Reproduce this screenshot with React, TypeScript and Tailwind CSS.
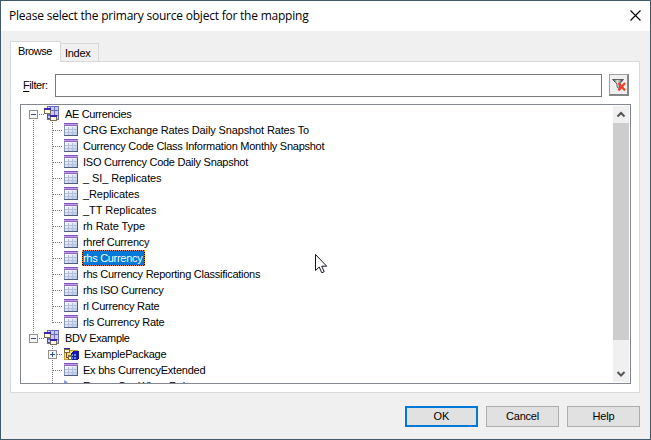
import React from "react";

type Row = {
  label: string;
  kind: "root" | "table" | "package" | "rule";
  trunk?: boolean;
  last?: boolean;
  selected?: boolean;
  tracking: string;
};

const rows: Row[] = [
  { label: "AE Currencies", kind: "root", trunk: true, tracking: "tracking-[-0.35px]" },
  { label: "CRG Exchange Rates Daily Snapshot Rates To", kind: "table", trunk: true, tracking: "tracking-[-0.13px]" },
  { label: "Currency Code Class Information Monthly Snapshot", kind: "table", trunk: true, tracking: "tracking-[-0.26px]" },
  { label: "ISO Currency Code Daily Snapshot", kind: "table", trunk: true, tracking: "tracking-[-0.25px]" },
  { label: "_ SI_ Replicates", kind: "table", trunk: true, tracking: "tracking-[-0.1px]" },
  { label: "_Replicates", kind: "table", trunk: true, tracking: "tracking-[-0.1px]" },
  { label: "_TT Replicates", kind: "table", trunk: true, tracking: "tracking-[-0.03px]" },
  { label: "rh Rate Type", kind: "table", trunk: true, tracking: "tracking-[-0.05px]" },
  { label: "rhref Currency", kind: "table", trunk: true, tracking: "tracking-[-0.3px]" },
  { label: "rhs Currency", kind: "table", trunk: true, selected: true, tracking: "tracking-[-0.3px]" },
  { label: "rhs Currency Reporting Classifications", kind: "table", trunk: true, tracking: "tracking-[-0.26px]" },
  { label: "rhs ISO Currency", kind: "table", trunk: true, tracking: "tracking-[-0.28px]" },
  { label: "rl Currency Rate", kind: "table", trunk: true, tracking: "tracking-[-0.23px]" },
  { label: "rls Currency Rate", kind: "table", trunk: true, last: true, tracking: "tracking-[-0.24px]" },
  { label: "BDV Example", kind: "root", tracking: "tracking-[-0.36px]" },
  { label: "ExamplePackage", kind: "package", tracking: "tracking-[-0.23px]" },
  { label: "Ex bhs CurrencyExtended", kind: "table", tracking: "tracking-[-0.24px]" },
  { label: "Ex rwy CurrWhen Rule", kind: "rule", tracking: "tracking-[-0.2px]" },
];

function Expander({ x, open }: { x: number; open: boolean }) {
  return (
    <g>
      <rect x={x + 0.5} y="4.5" width="8" height="8" fill="#f6f6f6" stroke="#919191" />
      <path d={`M${x + 2} 8.5h5`} stroke="#34508f" />
      {!open && <path d={`M${x + 4.5} 6v5`} stroke="#34508f" />}
    </g>
  );
}

/* Connector lines to the left of a row's icon. */
function Guides({ row }: { row: Row }) {
  const dot = { stroke: "#777", strokeDasharray: "1 1" };
  if (row.kind === "root") {
    return (
      <svg width="23" height="16" className="shrink-0" shapeRendering="crispEdges">
        {row.trunk ? <path d="M12.5 14v2" {...dot} /> : <path d="M12.5 0v4" {...dot} />}
        <path d="M18 8.5h5" {...dot} />
        <Expander x={8} open />
      </svg>
    );
  }
  return (
    <svg width="42" height="16" className="shrink-0" shapeRendering="crispEdges">
      {row.trunk && <path d="M12.5 0v16" {...dot} />}
      <path d={row.last ? "M31.5 0v9" : "M31.5 0v16"} {...dot} />
      {row.kind !== "rule" && <path d="M32 8.5h10" {...dot} />}
      {row.kind === "package" && <Expander x={27} open={false} />}
    </svg>
  );
}

function SchemaIcon() {
  return (
    <svg width="16" height="16" className="shrink-0" shapeRendering="crispEdges">
      <rect x="3" y="0" width="12" height="14" fill="#6a69cc" />
      <path d="M4 1h2v3H4zM7 1h3v3H7zM11 1h3v3h-3zM7 5h3v4H7zM11 5h3v4h-3zM4 10h2v3H4zM7 10h3v3H7zM11 10h3v3h-3z" fill="#c9cbf9" />
      <path d="M3.500 8v4.500H7" stroke="#514cab" fill="none" />
      <rect x="0" y="2" width="7" height="6" fill="#7d7050" />
      <rect x="1" y="4" width="5" height="3" fill="#fffbe9" />
      <rect x="0" y="2" width="7" height="2" fill="#3a26a6" />
      <rect x="6" y="9" width="7" height="6" fill="#7d7050" />
      <rect x="7" y="11" width="5" height="3" fill="#fffbe9" />
      <rect x="6" y="9" width="7" height="2" fill="#3a26a6" />
    </svg>
  );
}

function TableIcon() {
  return (
    <svg width="14" height="16" className="shrink-0" shapeRendering="crispEdges">
      <defs>
        <linearGradient id="cells" x1="0" y1="0" x2="1" y2="1">
          <stop offset="0" stopColor="#fff" />
          <stop offset="1" stopColor="#b7c9ec" />
        </linearGradient>
      </defs>
      <rect x="0" y="1" width="14" height="13" fill="#8b97b4" />
      <rect x="1" y="4" width="12" height="9" fill="url(#cells)" />
      <path d="M4.500 5v8M8.500 5v8M1 7.500h12M1 10.500h12" stroke="#b3bed8" />
      <path d="M0 1.500h14" stroke="#8150b0" />
      <path d="M0 2.500h14" stroke="#c896f5" />
      <path d="M0 3.500h14" stroke="#8e6bb5" />
      <path d="M13.500 4v10M0 13.500h14" stroke="#4c5c7e" />
    </svg>
  );
}

function PackageIcon() {
  return (
    <svg width="17" height="16" className="shrink-0" shapeRendering="crispEdges">
      <path d="M1 3h6v1h8v10H1z" fill="#c39c36" />
      <path d="M2 5h12v8H2z" fill="#f8dd72" />
      <rect x="1" y="2" width="6" height="5" fill="#7d6838" />
      <rect x="2" y="4" width="4" height="2" fill="#fff8e0" />
      <rect x="1" y="2" width="6" height="1" fill="#3522a0" />
      <path d="M3.500 7v4.500H6" stroke="#6b5420" fill="none" />
      <path d="M8 7l2-2h6v7l-2 2H8z" fill="#1718a6" />
      <path d="M9 8h1v2H9zM11 8h2v2h-2zM9 11h1v2H9zM11 11h2v2h-2z" fill="#6b8cf5" />
      <rect x="5" y="9" width="4" height="5" fill="#7d6838" />
      <rect x="6" y="11" width="2" height="2" fill="#fff8e0" />
    </svg>
  );
}

function RuleIcon() {
  return (
    <svg width="16" height="16" className="shrink-0">
      <path d="M0 2.500h1.500l6 6H0z" fill="#7e9be0" />
    </svg>
  );
}

function TreeRow({ row }: { row: Row }) {
  return (
    <div className="flex h-4 items-start">
      <Guides row={row} />
      <div
        className={
          row.kind === "root" || row.kind === "package" ? "flex w-5 shrink-0" : "flex w-[19px] shrink-0 pl-px"
        }
      >
        {row.kind === "root" && <SchemaIcon />}
        {row.kind === "table" && <TableIcon />}
        {row.kind === "package" && <PackageIcon />}
        {row.kind === "rule" && <RuleIcon />}
      </div>
      <span className={`h-4 border ${row.selected ? "border-dotted border-[#ff8728] bg-black" : "border-transparent"}`}>
        <span
          className={`block h-[14px] whitespace-pre leading-[14px] ${row.selected ? "bg-[#0078d7] pr-[2px] text-white" : ""} ${row.tracking}`}
        >
          {row.label}
        </span>
      </span>
    </div>
  );
}

export default function App() {
  return (
    <div className="relative flex h-[440px] w-[651px] flex-col overflow-hidden border border-[#40596b] bg-[#f0f0f0] font-['Liberation_Sans',Arial,sans-serif] text-[11px] text-black">
      <header className="flex h-[30px] shrink-0 items-center justify-between bg-white pl-2 pr-[9px]">
        <h1 className="font-['Open_Sans','Noto_Sans',sans-serif] text-[12px] leading-4 tracking-[-0.22px]">
          Please select the primary source object for the mapping
        </h1>
        <svg width="11" height="11" viewBox="0 0 11 11" className="mb-[2px]">
          <path d="M.5.5l10 10M10.500.5l-10 10" stroke="#000" strokeWidth="1.100" />
        </svg>
      </header>

      <nav className="flex h-[30px] shrink-0 items-end pl-[9px]">
        <div className="z-10 -mb-px h-[21px] w-[51px] border border-b-0 border-[#d9d9d9] bg-white pl-[7px] pt-[2px] leading-[14px] tracking-[-0.45px]">
          Browse
        </div>
        <div className="h-[18px] w-[38px] border border-b-0 border-l-0 border-[#d9d9d9] bg-[#f0f0f0] pl-1 pt-[2px] leading-[14px] tracking-[-0.3px]">
          Index
        </div>
      </nav>

      <main className="ml-[9px] flex h-[332px] w-[630px] shrink-0 flex-col border border-[#d9d9d9] bg-white pl-[9px]">
        <div className="mt-3 flex h-[23px] items-start">
          <label className="w-[35px] pl-[3px] pt-1 leading-[14px] tracking-[-0.4px]">
            <span className="underline underline-offset-2">F</span>ilter:
          </label>
          <input className="h-[23px] w-[547px] border border-[#7a7a7a] bg-white outline-none" />
          <button className="ml-[7px] flex h-[22px] w-5 items-center justify-center border border-b-2 border-r-2 border-[#858585] border-l-[#a0a0a0] border-t-[#a0a0a0] bg-[#efefef]">
            <svg width="14" height="14" viewBox="0 0 14 14">
              <defs>
                <linearGradient id="funnel">
                  <stop offset="0" stopColor="#444" />
                  <stop offset=".45" stopColor="#e0e0e0" />
                  <stop offset="1" stopColor="#333" />
                </linearGradient>
              </defs>
              <path d="M.5 1.500h11L7.500 6v5L5 9V6z" fill="url(#funnel)" stroke="#444" strokeWidth=".8" />
              <path d="M6.500 5l6.500 7.500M13 5l-6.500 7.500" stroke="#ef4025" strokeWidth="2.200" />
            </svg>
          </button>
        </div>

        <section className="mt-[7px] flex h-[280px] w-[611px] justify-between border border-[#828790] bg-white">
          <div className="h-[278px] flex-1 overflow-hidden pt-px">
            {rows.map((row) => (
              <TreeRow key={row.label} row={row} />
            ))}
          </div>
          <div className="my-px mr-px flex w-4 flex-col bg-[#f0f0f0]">
            <svg width="16" height="17">
              <path d="M4.500 10.500L8 7l3.500 3.500" fill="none" stroke="#555" strokeWidth="2" />
            </svg>
            <div className="h-[217px] bg-[#cdcdcd]" />
            <svg width="16" height="17" className="mt-auto">
              <path d="M4.500 7L8 10.500 11.500 7" fill="none" stroke="#555" strokeWidth="2" />
            </svg>
          </div>
        </section>
      </main>

      <footer className="mt-[13px] flex shrink-0 justify-end gap-2 pr-[10px]">
        <button className="h-[21px] w-[73px] border-2 border-[#0078d7] bg-[#e1e1e1] pb-px leading-[14px]">OK</button>
        <button className="h-[21px] w-[73px] border border-[#adadad] bg-[#e1e1e1] pb-px leading-[14px] tracking-[-0.2px]">
          Cancel
        </button>
        <button className="h-[21px] w-[73px] border border-[#adadad] bg-[#e1e1e1] pb-px leading-[14px] tracking-[-0.2px]">
          Help
        </button>
      </footer>

      <svg width="13" height="20" viewBox="0 0 13 20" className="absolute left-[314px] top-[253px]">
        <path d="M.5.5v16l3.700-3.500 2.600 5.800 2.400-1.100-2.500-5.500h5z" fill="#fff" stroke="#15151f" />
      </svg>
    </div>
  );
}
